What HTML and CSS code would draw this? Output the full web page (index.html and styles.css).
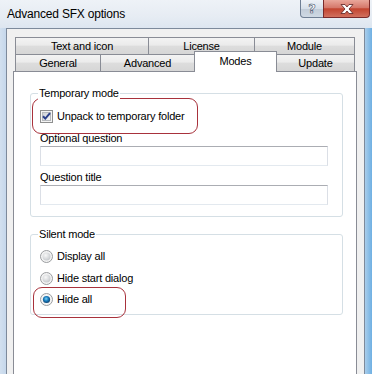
FILE: index.html
```html
<!DOCTYPE html>
<html>
<head>
<meta charset="utf-8">
<link rel="stylesheet" href="styles.css">
</head>
<body>
<div class="window">
  <div class="titlebar">
    <span class="title">Advanced SFX options</span>
    <div class="caption-buttons">
      <div class="cap-btn help"><span class="help-glyph">?</span></div>
      <div class="cap-btn close">
        <svg width="16" height="12" viewBox="0 0 16 12">
          <path d="M2 1.5 L6 1.5 L8 4 L10 1.5 L14 1.5 L10 6 L14 10.5 L10 10.5 L8 8 L6 10.5 L2 10.5 L6 6 Z" fill="#ffffff" stroke="#5a2020" stroke-width="0.8" stroke-linejoin="round"/>
        </svg>
      </div>
    </div>
  </div>
  <div class="client">
    <div class="tabstrip">
      <div class="tabrow">
        <div class="tab w-text">Text and icon</div>
        <div class="tab w-license">License</div>
        <div class="tab w-module">Module</div>
      </div>
      <div class="tabrow">
        <div class="tab w-general">General</div>
        <div class="tab w-advanced">Advanced</div>
        <div class="tab w-modes active">Modes</div>
        <div class="tab w-update">Update</div>
      </div>
    </div>
    <div class="panel">
      <div class="group group-temp">
        <span class="legend">Temporary mode</span>
        <div class="hl hl-check">
          <div class="row">
            <svg class="checkbox" width="13" height="13" viewBox="0 0 13 13">
              <defs>
                <linearGradient id="cbg" x1="0" y1="0" x2="1" y2="1">
                  <stop offset="0" stop-color="#cbcfd5"/>
                  <stop offset="1" stop-color="#f6f6f6"/>
                </linearGradient>
              </defs>
              <rect x="0.5" y="0.5" width="12" height="12" fill="#f4f4f4" stroke="#8e8f8f"/>
              <rect x="2.5" y="2.5" width="8" height="8" fill="url(#cbg)" stroke="#b6b9bd" stroke-width="1"/>
              <path d="M3 6.2 L5.3 8.6 L10 3.2" fill="none" stroke="#2a3f8a" stroke-width="2"/>
            </svg>
            <span class="label">Unpack to temporary folder</span>
          </div>
        </div>
        <div class="field-label first">Optional question</div>
        <div class="textbox"></div>
        <div class="field-label">Question title</div>
        <div class="textbox"></div>
      </div>
      <div class="group group-silent">
        <span class="legend">Silent mode</span>
        <div class="radio-row">
          <svg class="radio" width="13" height="13" viewBox="0 0 13 13">
            <defs>
              <radialGradient id="rg" cx="0.4" cy="0.35" r="0.7">
                <stop offset="0" stop-color="#f8f8f8"/>
                <stop offset="1" stop-color="#c4c7cb"/>
              </radialGradient>
            </defs>
            <circle cx="6.5" cy="6.5" r="6" fill="#f4f4f4" stroke="#9a9c9f"/>
            <circle cx="6.5" cy="6.5" r="4" fill="url(#rg)"/>
          </svg>
          <span class="label">Display all</span>
        </div>
        <div class="radio-row">
          <svg class="radio" width="13" height="13" viewBox="0 0 13 13">
            <circle cx="6.5" cy="6.5" r="6" fill="#f4f4f4" stroke="#9a9c9f"/>
            <circle cx="6.5" cy="6.5" r="4" fill="url(#rg)"/>
          </svg>
          <span class="label">Hide start dialog</span>
        </div>
        <div class="hl hl-radio">
          <div class="radio-row">
            <svg class="radio" width="13" height="13" viewBox="0 0 13 13">
              <defs>
                <radialGradient id="rs" cx="0.45" cy="0.4" r="0.6">
                  <stop offset="0" stop-color="#7fd1f5"/>
                  <stop offset="0.5" stop-color="#1a7fc0"/>
                  <stop offset="1" stop-color="#0d3f6e"/>
                </radialGradient>
              </defs>
              <circle cx="6.5" cy="6.5" r="6" fill="#f4f4f4" stroke="#9a9c9f"/>
              <circle cx="6.5" cy="6.5" r="3.6" fill="url(#rs)"/>
            </svg>
            <span class="label">Hide all</span>
          </div>
        </div>
      </div>
    </div>
  </div>
</div>
</body>
</html>
```
FILE: styles.css
```css
* { box-sizing: border-box; }
html, body { margin: 0; padding: 0; }
body {
  width: 372px;
  height: 374px;
  overflow: hidden;
  font-family: "Liberation Sans", Arial, sans-serif;
  color: #000;
}
.window {
  width: 372px;
  height: 374px;
  display: flex;
  flex-direction: column;
  overflow: hidden;
  background:
    linear-gradient(to right, #d2e0ef 0, #c5d7eb 6px, rgba(0,0,0,0) 6px, rgba(0,0,0,0) 365px, #a9cdea 365px, #6fb0e3 372px),
    #dfe8f2;
}
.titlebar {
  height: 28px;
  flex: none;
  display: flex;
  justify-content: space-between;
  align-items: flex-start;
  padding-left: 7px;
  background: linear-gradient(to bottom, #eef2f7 0, #e6ecf3 60%, #dde6f0 100%);
}
.title {
  font-size: 12px;
  letter-spacing: -0.2px;
  line-height: 15px;
  margin-top: 7px;
}
.caption-buttons {
  display: flex;
  margin-right: 2px;
}
.cap-btn {
  height: 18px;
  display: flex;
  align-items: center;
  justify-content: center;
  border: 1px solid #6f7f94;
  border-top: none;
}
.help {
  width: 24px;
  border-radius: 0 0 0 4px;
  background: linear-gradient(to bottom, #eef2f7 0, #d7e0ea 50%, #c1ccd8 51%, #cfd9e4 100%);
}
.help-glyph {
  font-family: "DejaVu Sans", sans-serif;
  font-weight: bold;
  font-size: 13px;
  line-height: 14px;
  color: #ffffff;
  -webkit-text-stroke: 0.6px #44546a;
}
.close {
  width: 47px;
  margin-left: -1px;
  border-color: #7a2a2a;
  border-radius: 0 0 4px 0;
  background: linear-gradient(to bottom, #e9a79b 0, #d5786a 45%, #c2442f 52%, #d1705e 100%);
}
.client {
  flex: 1;
  margin: 0 7px 0 6px;
  border: 1px solid #7d8a9b;
  border-bottom: none;
  background: #f0f0f0;
  padding: 8px 7px 0 6px;
  display: flex;
  flex-direction: column;
}
.tabstrip {
  padding: 0 2px;
}
.tabrow {
  display: flex;
  height: 17px;
  align-items: flex-end;
}
.tab {
  height: 17px;
  border: 1px solid #898c95;
  border-bottom: none;
  margin-left: -1px;
  font-size: 11px;
  letter-spacing: -0.2px;
  line-height: 16px;
  text-align: center;
  background: linear-gradient(to bottom, #f3f3f3 0, #ebebeb 45%, #dddddd 50%, #d6d6d6 100%);
}
.tab:first-child { margin-left: 0; }
.w-text { width: 134px; }
.w-license { width: 107px; }
.w-module { width: 101px; }
.w-general { width: 86px; }
.w-advanced { width: 95px; }
.w-modes { width: 83px; }
.w-update { width: 79px; }
.tab.active {
  position: relative;
  z-index: 1;
  height: 21px;
  margin-bottom: -1px;
  padding-top: 1px;
  background: #ffffff;
}
.panel {
  flex: none;
  height: 330px;
  background: #ffffff;
  border: 1px solid #898c95;
  padding: 21px 13px 0 16px;
}
.group {
  position: relative;
  border: 1px solid #d5dfe5;
  border-radius: 3px;
  padding-left: 9px;
  font-size: 11px;
  letter-spacing: -0.2px;
  line-height: 15px;
}
.legend {
  position: absolute;
  top: -8px;
  left: 7px;
  padding: 0 1px;
  background: #ffffff;
  line-height: 15px;
}
.group-temp {
  padding-top: 4px;
  padding-bottom: 11px;
}
.hl {
  border: 1px solid #a8323c;
  border-radius: 9px;
}
.hl-check {
  width: 166px;
  height: 36px;
  margin-left: -8px;
  padding-left: 7px;
  display: flex;
  align-items: center;
}
.row {
  display: flex;
  align-items: center;
}
.checkbox { flex: none; display: block; }
.label { margin-left: 4px; }
.field-label {
  margin-top: 4px;
  line-height: 15px;
}
.field-label.first { margin-top: -3px; }
.textbox {
  width: 288px;
  height: 20px;
  border: 1px solid #dbdfe6;
  border-top-color: #abadb3;
  border-bottom-color: #e3e9ef;
  background: #ffffff;
}
.group-silent {
  margin-top: 17px;
  padding-top: 11px;
  padding-bottom: 3.5px;
}
.radio-row {
  height: 21.5px;
  display: flex;
  align-items: center;
}
.radio { flex: none; display: block; }
.hl-radio {
  width: 93px;
  margin: -2px 0 -7px -7px;
  padding: 1px 0 6px 6px;
}
```
